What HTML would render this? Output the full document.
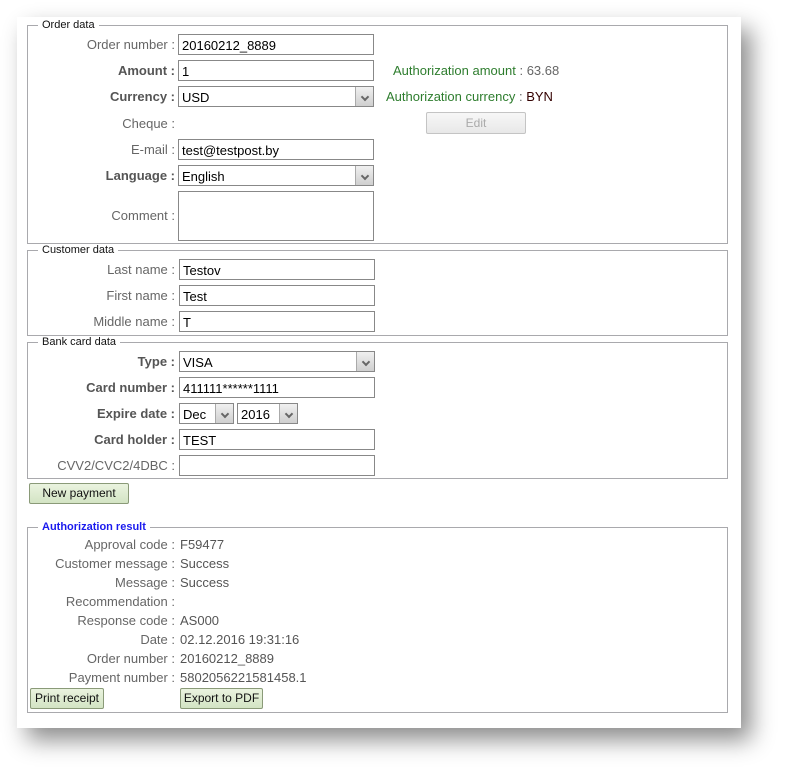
<!DOCTYPE html>
<html><head><meta charset="utf-8"><style>
*{box-sizing:border-box;margin:0;padding:0}
body{width:789px;height:776px;background:#fff;position:relative;overflow:hidden;font-family:"Liberation Sans",Arial,sans-serif;font-size:13px}
.card{position:absolute;left:17px;top:17px;width:724px;height:711px;background:#fff;box-shadow:10px 12px 22px rgba(0,0,0,0.45)}
.fs{position:absolute;border:1px solid #a9a9ad;left:27px;width:701px}
.lg{position:absolute;left:10px;top:-7px;background:#fff;padding:0 4px;font-size:11px;color:#111;line-height:13px}
.a{position:absolute}
.l{position:absolute;left:0;width:175px;text-align:right;color:#666;white-space:nowrap;line-height:16px;margin-top:1px}
.l.b{font-weight:bold;color:#555}
.in{position:absolute;height:21px;border:1px solid #888;background:#fff;color:#000;padding:3px 3px 0;line-height:15px;white-space:nowrap}
.sel:after{content:"";position:absolute;right:0;top:0;width:17px;height:19px;background:linear-gradient(#f0f0f0,#cfcfcf);border-left:1px solid #aaa}
.sel:before{content:"";position:absolute;right:5px;top:7px;width:4px;height:4px;border-right:2px solid #666;border-bottom:2px solid #666;transform:rotate(45deg);z-index:2}
.v{position:absolute;left:180px;color:#555;line-height:16px;white-space:nowrap;margin-top:1px}
.btn{position:absolute;height:21px;border:1px solid #8a9a78;border-radius:2px;background:linear-gradient(#eaf3df,#d3e4c4);color:#111;text-align:center;line-height:19px;font-size:12px;white-space:nowrap}
.g{color:#2e7d2e}
</style></head><body>
<div class="card"></div>

<div class="fs" style="top:25px;height:219px">
<div class="lg">Order data</div>
</div>
<div class="a" style="left:0;top:0">
<div class="l" style="top:36px">Order number :</div>
<div class="in" style="left:178px;top:34px;width:196px">20160212_8889</div>
<div class="l b" style="top:62px">Amount :</div>
<div class="in" style="left:178px;top:60px;width:196px">1</div>
<div class="l b" style="top:88px">Currency :</div>
<div class="in sel" style="left:178px;top:86px;width:196px">USD</div>
<div class="l" style="top:115px">Cheque :</div>
<div class="l" style="top:141px">E-mail :</div>
<div class="in" style="left:178px;top:139px;width:196px">test@testpost.by</div>
<div class="l b" style="top:167px">Language :</div>
<div class="in sel" style="left:178px;top:165px;width:196px">English</div>
<div class="l" style="top:207px">Comment :</div>
<div class="in" style="left:178px;top:191px;width:196px;height:50px"></div>
<div class="a g" style="left:393px;top:63px;line-height:16px;white-space:nowrap">Authorization amount <span style="color:#666">: 63.68</span></div>
<div class="a g" style="left:386px;top:89px;line-height:16px;white-space:nowrap">Authorization currency <span style="color:#666">:</span> <span style="color:#300">BYN</span></div>
<div class="a" style="left:426px;top:112px;width:100px;height:22px;border:1px solid #c4c4c4;border-radius:2px;background:linear-gradient(#f7f7f7,#e8e8e8);color:#aaa;text-align:center;line-height:20px;font-size:12px">Edit</div>
</div>

<div class="fs" style="top:250px;height:86px"><div class="lg">Customer data</div></div>
<div class="l" style="top:261px">Last name :</div>
<div class="in" style="left:179px;top:259px;width:196px">Testov</div>
<div class="l" style="top:287px">First name :</div>
<div class="in" style="left:179px;top:285px;width:196px">Test</div>
<div class="l" style="top:313px">Middle name :</div>
<div class="in" style="left:179px;top:311px;width:196px">T</div>

<div class="fs" style="top:342px;height:137px"><div class="lg">Bank card data</div></div>
<div class="l b" style="top:353px">Type :</div>
<div class="in sel" style="left:179px;top:351px;width:196px">VISA</div>
<div class="l b" style="top:379px">Card number :</div>
<div class="in" style="left:179px;top:377px;width:196px">411111******1111</div>
<div class="l b" style="top:405px">Expire date :</div>
<div class="in sel" style="left:179px;top:403px;width:55px">Dec</div>
<div class="in sel" style="left:237px;top:403px;width:61px">2016</div>
<div class="l b" style="top:431px">Card holder :</div>
<div class="in" style="left:179px;top:429px;width:196px">TEST</div>
<div class="l" style="top:457px">CVV2/CVC2/4DBC :</div>
<div class="in" style="left:179px;top:455px;width:196px"></div>

<div class="btn" style="left:29px;top:483px;width:100px">New payment</div>

<div class="fs" style="top:527px;height:186px"><div class="lg" style="color:#1a1aee;font-weight:bold">Authorization result</div></div>
<div class="l" style="top:536px">Approval code :</div><div class="v" style="top:536px">F59477</div>
<div class="l" style="top:555px">Customer message :</div><div class="v" style="top:555px">Success</div>
<div class="l" style="top:574px">Message :</div><div class="v" style="top:574px">Success</div>
<div class="l" style="top:593px">Recommendation :</div>
<div class="l" style="top:612px">Response code :</div><div class="v" style="top:612px">AS000</div>
<div class="l" style="top:631px">Date :</div><div class="v" style="top:631px">02.12.2016 19:31:16</div>
<div class="l" style="top:650px">Order number :</div><div class="v" style="top:650px">20160212_8889</div>
<div class="l" style="top:669px">Payment number :</div><div class="v" style="top:669px">5802056221581458.1</div>
<div class="btn" style="left:30px;top:688px;width:74px">Print receipt</div>
<div class="btn" style="left:180px;top:688px;width:83px">Export to PDF</div>
</body></html>
